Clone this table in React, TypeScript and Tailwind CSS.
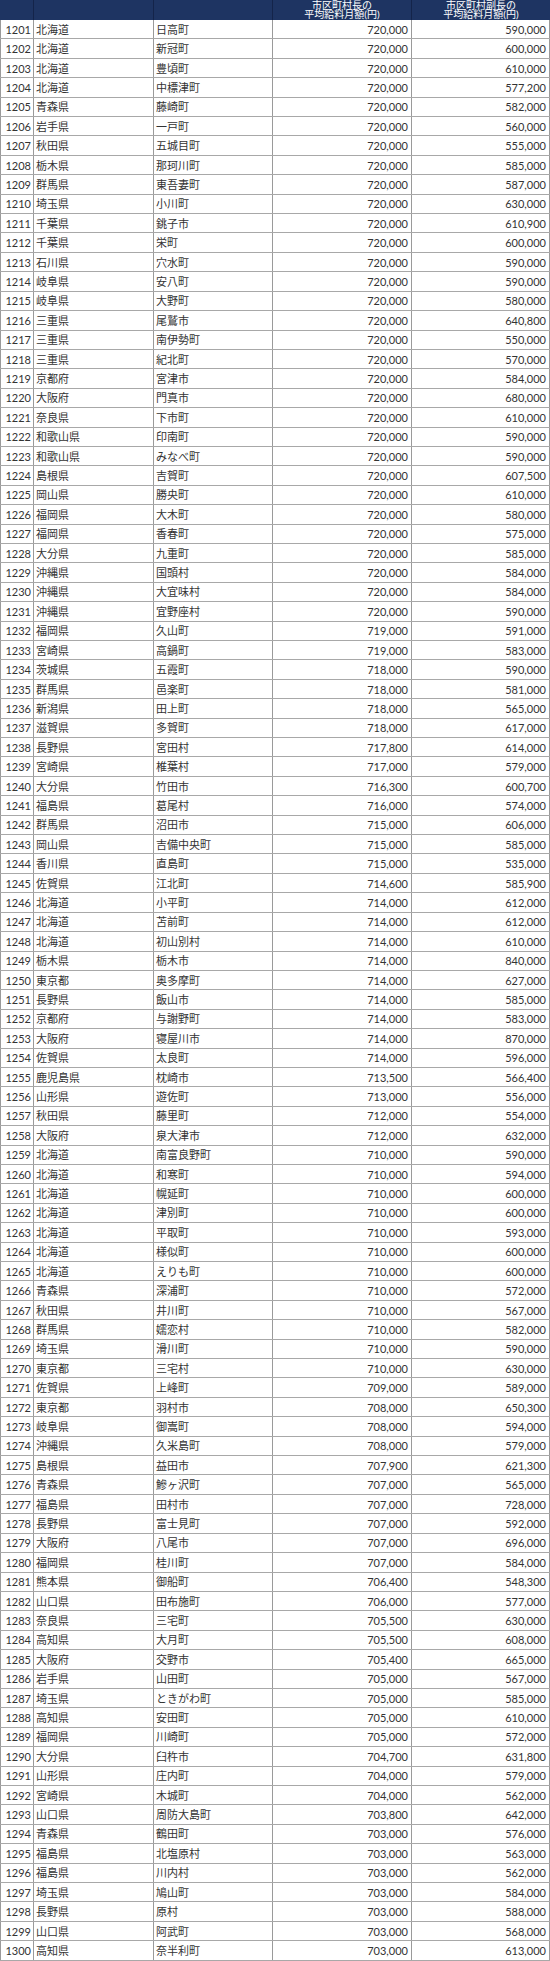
import React from "react";

const raw = `1201 北海道 日高町 720,000 590,000
1202 北海道 新冠町 720,000 600,000
1203 北海道 豊頃町 720,000 610,000
1204 北海道 中標津町 720,000 577,200
1205 青森県 藤崎町 720,000 582,000
1206 岩手県 一戸町 720,000 560,000
1207 秋田県 五城目町 720,000 555,000
1208 栃木県 那珂川町 720,000 585,000
1209 群馬県 東吾妻町 720,000 587,000
1210 埼玉県 小川町 720,000 630,000
1211 千葉県 銚子市 720,000 610,900
1212 千葉県 栄町 720,000 600,000
1213 石川県 穴水町 720,000 590,000
1214 岐阜県 安八町 720,000 590,000
1215 岐阜県 大野町 720,000 580,000
1216 三重県 尾鷲市 720,000 640,800
1217 三重県 南伊勢町 720,000 550,000
1218 三重県 紀北町 720,000 570,000
1219 京都府 宮津市 720,000 584,000
1220 大阪府 門真市 720,000 680,000
1221 奈良県 下市町 720,000 610,000
1222 和歌山県 印南町 720,000 590,000
1223 和歌山県 みなべ町 720,000 590,000
1224 島根県 吉賀町 720,000 607,500
1225 岡山県 勝央町 720,000 610,000
1226 福岡県 大木町 720,000 580,000
1227 福岡県 香春町 720,000 575,000
1228 大分県 九重町 720,000 585,000
1229 沖縄県 国頭村 720,000 584,000
1230 沖縄県 大宜味村 720,000 584,000
1231 沖縄県 宜野座村 720,000 590,000
1232 福岡県 久山町 719,000 591,000
1233 宮崎県 高鍋町 719,000 583,000
1234 茨城県 五霞町 718,000 590,000
1235 群馬県 邑楽町 718,000 581,000
1236 新潟県 田上町 718,000 565,000
1237 滋賀県 多賀町 718,000 617,000
1238 長野県 宮田村 717,800 614,000
1239 宮崎県 椎葉村 717,000 579,000
1240 大分県 竹田市 716,300 600,700
1241 福島県 葛尾村 716,000 574,000
1242 群馬県 沼田市 715,000 606,000
1243 岡山県 吉備中央町 715,000 585,000
1244 香川県 直島町 715,000 535,000
1245 佐賀県 江北町 714,600 585,900
1246 北海道 小平町 714,000 612,000
1247 北海道 苫前町 714,000 612,000
1248 北海道 初山別村 714,000 610,000
1249 栃木県 栃木市 714,000 840,000
1250 東京都 奥多摩町 714,000 627,000
1251 長野県 飯山市 714,000 585,000
1252 京都府 与謝野町 714,000 583,000
1253 大阪府 寝屋川市 714,000 870,000
1254 佐賀県 太良町 714,000 596,000
1255 鹿児島県 枕崎市 713,500 566,400
1256 山形県 遊佐町 713,000 556,000
1257 秋田県 藤里町 712,000 554,000
1258 大阪府 泉大津市 712,000 632,000
1259 北海道 南富良野町 710,000 590,000
1260 北海道 和寒町 710,000 594,000
1261 北海道 幌延町 710,000 600,000
1262 北海道 津別町 710,000 600,000
1263 北海道 平取町 710,000 593,000
1264 北海道 様似町 710,000 600,000
1265 北海道 えりも町 710,000 600,000
1266 青森県 深浦町 710,000 572,000
1267 秋田県 井川町 710,000 567,000
1268 群馬県 嬬恋村 710,000 582,000
1269 埼玉県 滑川町 710,000 590,000
1270 東京都 三宅村 710,000 630,000
1271 佐賀県 上峰町 709,000 589,000
1272 東京都 羽村市 708,000 650,300
1273 岐阜県 御嵩町 708,000 594,000
1274 沖縄県 久米島町 708,000 579,000
1275 島根県 益田市 707,900 621,300
1276 青森県 鰺ヶ沢町 707,000 565,000
1277 福島県 田村市 707,000 728,000
1278 長野県 富士見町 707,000 592,000
1279 大阪府 八尾市 707,000 696,000
1280 福岡県 桂川町 707,000 584,000
1281 熊本県 御船町 706,400 548,300
1282 山口県 田布施町 706,000 577,000
1283 奈良県 三宅町 705,500 630,000
1284 高知県 大月町 705,500 608,000
1285 大阪府 交野市 705,400 665,000
1286 岩手県 山田町 705,000 567,000
1287 埼玉県 ときがわ町 705,000 585,000
1288 高知県 安田町 705,000 610,000
1289 福岡県 川崎町 705,000 572,000
1290 大分県 臼杵市 704,700 631,800
1291 山形県 庄内町 704,000 579,000
1292 宮崎県 木城町 704,000 562,000
1293 山口県 周防大島町 703,800 642,000
1294 青森県 鶴田町 703,000 576,000
1295 福島県 北塩原村 703,000 563,000
1296 福島県 川内村 703,000 562,000
1297 埼玉県 鳩山町 703,000 584,000
1298 長野県 原村 703,000 588,000
1299 山口県 阿武町 703,000 568,000
1300 高知県 奈半利町 703,000 613,000`;

const rows = raw.split("\n").map((l) => l.trim().split(" "));

const font = { fontFamily: '"Lato", "Noto Sans CJK JP", sans-serif' };

export default function App() {
  return (
    <div
      className="w-[550px] bg-white text-[#333333] text-[11px] leading-none"
      style={font}
    >
      <div className="grid grid-cols-[34px_120px_119px_139px_138px] h-[20px] bg-[#1e3462] text-white">
        <div className="border-r border-[#14244a]" />
        <div className="border-r border-[#14244a]" />
        <div className="border-r border-[#14244a]" />
        <div className="border-r border-[#14244a] flex flex-col items-center justify-center text-[10px] leading-[9.5px]">
          <span>市区町村長の</span>
          <span>平均給料月額(円)</span>
        </div>
        <div className="flex flex-col items-center justify-center text-[10px] leading-[9.5px]">
          <span>市区町村副長の</span>
          <span>平均給料月額(円)</span>
        </div>
      </div>
      {rows.map((r) => (
        <div
          key={r[0]}
          className="grid grid-cols-[34px_120px_119px_139px_138px] h-[19.41px] border-b border-[#a8a8a8]"
        >
          <div className="border-l border-r border-[#9a9a9a] flex items-center justify-end pr-[2px]">
            {r[0]}
          </div>
          <div className="border-r border-[#9a9a9a] flex items-center pl-[2px]">
            {r[1]}
          </div>
          <div className="border-r border-[#9a9a9a] flex items-center pl-[2px]">
            {r[2]}
          </div>
          <div className="border-r border-[#9a9a9a] flex items-center justify-end pr-[3px]">
            {r[3]}
          </div>
          <div className="border-r border-[#9a9a9a] flex items-center justify-end pr-[3px]">
            {r[4]}
          </div>
        </div>
      ))}
    </div>
  );
}
